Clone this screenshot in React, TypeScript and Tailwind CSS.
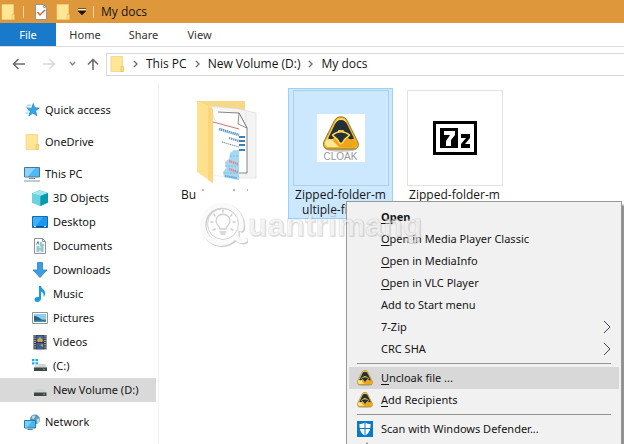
import type { ReactNode } from 'react';
import clsx from 'clsx';

function FolderIcon() {
  return (
    <svg className="h-4 w-4 shrink-0" viewBox="0 0 16 16">
      <path d="M2 0.5h11.5v15H2z" fill="#ffe694" stroke="#ecd07c" strokeWidth="0.7" />
      <path d="M12 10.5h2.5v5h-2.5z" fill="#ffdf7c" stroke="#e3bf60" strokeWidth="0.7" />
    </svg>
  );
}

function StarIcon() {
  return (
    <svg className="h-4 w-4" viewBox="0 0 16 16">
      <path d="M9.3 1.5l1.4 4.3 4.6.2-3.7 2.8 1.2 4.9-3.9-2.6-4.1 2.8 1.5-4.7-3-2.8 4.3-.2z" fill="#35a5e8" stroke="#1687cd" strokeWidth="0.7" />
      <path d="M3 3.2h4M1.5 5.2h4M3.5 8.8h2M1.5 11h3" stroke="#73c3ef" strokeWidth="0.9" />
    </svg>
  );
}

function PcIcon() {
  return (
    <svg className="h-4 w-4" viewBox="0 0 16 16">
      <path d="M.5 1.5h15v9.5H.5z" fill="#4fb8f5" stroke="#4b7690" />
      <path d="M1 2h10L4 10.5H1z" fill="#8cd3fb" />
      <path d="M5 12.5h6" stroke="#78909c" />
      <path d="M0 15h16" stroke="#8198a4" strokeWidth="1" />
    </svg>
  );
}

function CubeIcon() {
  return (
    <svg className="h-4 w-4" viewBox="0 0 16 16">
      <path d="M0 3.5L7.5.3 16 3v9.5L8.5 16 0 12.5z" fill="#20b5c9" />
      <path d="M0 3.5L7.5.3 16 3 8.5 6z" fill="#a2e6ed" />
      <path d="M0 3.5L8.5 6v10L0 12.5z" fill="#6bd3df" />
      <path d="M8.5 6L16 3v9.5L8.5 16z" fill="#0799b0" />
    </svg>
  );
}

function DesktopIcon() {
  return (
    <svg className="h-4 w-4" viewBox="0 0 16 16">
      <path d="M.5 2.5h15v11H.5z" fill="#1a98ee" stroke="#126eb1" />
      <path d="M1 3h10L4 12H1z" fill="#3eb0f8" />
      <path d="M1 12.5h14" stroke="#075689" />
      <path d="M2 12.5h2M12 12.5h2" stroke="#d4efff" />
    </svg>
  );
}

function DocumentIcon() {
  return (
    <svg className="h-4 w-4" viewBox="0 0 16 16">
      <path d="M2.5.5h8l3 3v12h-11z" fill="#fff" stroke="#8b9498" />
      <path d="M10.5.5v3h3" fill="none" stroke="#8b9498" />
      <path d="M4.5 6.5l1.5-3 1 3M8 5h2M8 7h4M4.5 9h3M8.5 9h3M4.5 11h7M4.5 13h3M8.5 13h3" fill="none" stroke="#2e8e9e" strokeWidth="1" />
    </svg>
  );
}

function DownloadIcon() {
  return (
    <svg className="h-4 w-4" viewBox="0 0 16 16">
      <path d="M5.5.5h5V8H15l-7 7.5L1 8h4.5z" fill="#3e9de2" stroke="#2983c6" strokeWidth="0.8" />
    </svg>
  );
}

function MusicIcon() {
  return (
    <svg className="h-4 w-4" viewBox="0 0 16 16">
      <path d="M7 0h2c.2 3 4.2 3.5 4.2 7.2 0 1.6-.7 2.8-1.7 3.6.5-3-.7-4.6-2.5-5.3v7.3C9 14.7 7.3 16 5.3 16 3.6 16 2.5 15 2.5 13.7c0-1.700 2-3.100 4.500-2.800z" fill="#1a9be3" />
    </svg>
  );
}

function PictureIcon() {
  return (
    <svg className="h-4 w-4" viewBox="0 0 16 16">
      <path d="M.5 2.5h15v11H.5z" fill="#fff" stroke="#8f9699" />
      <path d="M2 4h12v8H2z" fill="#8fcbed" />
      <path d="M2 6c3 0 5 1.5 7 3s3 .5 5 .5V12H2z" fill="#24617f" />
      <path d="M2 10.5h12V12H2z" fill="#4596a4" />
    </svg>
  );
}

function VideoIcon() {
  return (
    <svg className="h-4 w-4" viewBox="0 0 16 16">
      <path d="M1.5 1h13v14.5h-13z" fill="#30343b" />
      <path d="M4.5 1.5h7V8h-7z" fill="#4267a9" />
      <path d="M4.5 9h7v6h-7z" fill="#3d5c9c" />
      <path d="M5 6l3-3 3 3-1 2H6zM8 11l3-1v3z" fill="#d5a541" />
      <path d="M3 1.5v14M13 1.5v14" stroke="#f4f4f4" strokeWidth="1.3" strokeDasharray="1 1.2" />
    </svg>
  );
}

function DriveIcon({ system }: { system?: boolean }) {
  return (
    <svg className="h-4 w-4" viewBox="0 0 16 16">
      {system && <path d="M0 1h2.5v2.3H0zM3.5 1H6v2.3H3.5zM0 4.3h2.5v2.3H0zM3.5 4.3H6v2.3H3.5z" fill="#21aee5" />}
      <path d={system ? 'M6.5 6H13l2 4H2l1-2.500h3.500z' : 'M4 7h8.5l2 4H2z'} fill="#d1d4d5" />
      <path d={system ? 'M2 9.5h13V13H2z' : 'M2 10.5h12.5V14H2z'} fill="#3e4648" />
      <circle cx="12" cy={system ? 11.3 : 12.3} r=".8" fill="#48d66b" />
    </svg>
  );
}

function NetworkIcon() {
  return (
    <svg className="h-4 w-4" viewBox="0 0 16 16">
      <circle cx="11" cy="5.5" r="5" fill="#5a9ab9" />
      <path d="M8 2.5c2-2 4-.5 3 1L9.5 5 8 4.5zM12.5 5l3-.5c.5 3-1 5-2 5.5z" fill="#b9dbe4" />
      <path d="M.5 6.5h11V14H.5z" fill="#49b6ef" stroke="#267daf" />
      <path d="M1 7h7l-5 6.5H1z" fill="#7bd0f8" />
      <path d="M3.5 15.5h5" stroke="#54798b" />
    </svg>
  );
}

function CloakMark({ className }: { className: string }) {
  return (
    <svg className={className} viewBox="0 0 36 36">
      <ellipse cx="18" cy="33.5" rx="15" ry="2.2" fill="#8a8370" opacity=".5" />
      <path d="M18 .8c2.5 0 4.5 1 6 3.5l10.500 21C36.600 29 35 33 31 33H5c-4 0-5.600-4-4-7.700l10.500-21C13 1.800 15.500.8 18 .8z" fill="#f0b41e" stroke="#6b5318" strokeWidth=".7" />
      <path d="M18 2c2.200 0 4 1 5 3L18 14 5 30c-3 0-3.500-2-2.500-4.500L13 5c1-2 2.800-3 5-3z" fill="#ffd95b" />
      <path d="M18 16l15 10c.8 3-1 5-4 5H7z" fill="#efa51b" />
      <path d="M2.500 25c-1 4 .5 6 4 6H16L8 23z" fill="#ffe898" />
      <path d="M18 4c-3.500 0-5 2-6.500 5L5 22.500c3 1.500 6 .5 7.500-2l3-6.500h5l3 6.500c1.500 2.500 4.500 3.500 7.500 2L24.500 9C23 6 21.500 4 18 4z" fill="#243136" />
      <path d="M9.500 19c5-4.500 12-4.500 17 0-2 3-5 3-6.500 7l-2 2-2-2c-1.500-4-4.500-4-6.500-7z" fill="#243136" stroke="#ffd658" strokeWidth="1.500" />
    </svg>
  );
}

function DefenderIcon() {
  return (
    <svg className="h-4 w-4" viewBox="0 0 16 16">
      <path d="M0 0h16v16H0z" fill="#087bc7" />
      <path d="M8 1.5c2 1.3 3.7 1.600 5.500 1.600C13.800 9 12 12.500 8 14.800 4 12.500 2.200 9 2.500 3.100 4.300 3.100 6 2.800 8 1.500z" fill="#fff" />
      <path d="M8 1v14M2 7.500h12" stroke="#087bc7" />
    </svg>
  );
}

function FolderPreview() {
  return (
    <svg className="h-[84px] w-16" viewBox="0 0 64 84">
      <path d="M2 1h48v14H2z" fill="#f6d888" />
      <path d="M14 6l30 3 17 4v65H44z" fill="#f4f4f4" stroke="#dcdcdc" strokeWidth=".7" />
      <path d="M51 12v64" stroke="#e4e4e4" />
      <path d="M16 8l28 5 8 15v45l-10 2z" fill="#fff" />
      <path d="M23 12l21 1 8 15v45h-8" fill="none" stroke="#666" strokeWidth=".8" />
      <path d="M44 13l-1 11 9 4z" fill="#fafafa" stroke="#666" strokeWidth=".7" />
      <path d="M18 20l26 8v52l-26-5z" fill="#fff" stroke="#e3e3e3" strokeWidth=".5" />
      <path d="M18 22l26 7" stroke="#b05a60" strokeWidth=".8" />
      <path d="M24 29l20 6" stroke="#6a9cc2" strokeWidth="2.6" strokeDasharray="1.5 .5" />
      <path d="M34 38l10 3" stroke="#7b9fbd" strokeWidth="2.2" strokeDasharray="1.5 .6" />
      <path d="M27 42l17 5" stroke="#8793a2" strokeDasharray="1.5 .5" />
      <path d="M44 37h6M44 41h6M44 45h6M44 50h6" stroke="#3c7fbb" strokeWidth="2" />
      <path d="M44 50v30l-15-3-1-5 3-4-1-6 4-3 1-6 4-3z" fill="#a6d9f1" />
      <path d="M30 66h13M29 73h14M35 56h9" stroke="#79bfe4" strokeWidth="1" strokeDasharray="2 1" />
      <path d="M34 61l9 3M34 69l9 3" stroke="#dd8b98" strokeWidth="2.4" strokeDasharray="1.5 .5" />
      <path d="M30 76l12 2" stroke="#5aa9d8" strokeWidth="2" strokeDasharray="1.5 .6" />
      <path d="M2 1l15 6v75L2 72z" fill="#ffe08e" />
      <path d="M13 6l5 3v74l-5-3z" fill="#fbd67c" />
    </svg>
  );
}

const sidebar: { label: string; icon: ReactNode; nested?: boolean; selected?: boolean; spaced?: boolean }[] = [
  { label: 'Quick access', icon: <StarIcon /> },
  { label: 'OneDrive', icon: <FolderIcon />, spaced: true },
  { label: 'This PC', icon: <PcIcon />, spaced: true },
  { label: '3D Objects', icon: <CubeIcon />, nested: true },
  { label: 'Desktop', icon: <DesktopIcon />, nested: true },
  { label: 'Documents', icon: <DocumentIcon />, nested: true },
  { label: 'Downloads', icon: <DownloadIcon />, nested: true },
  { label: 'Music', icon: <MusicIcon />, nested: true },
  { label: 'Pictures', icon: <PictureIcon />, nested: true },
  { label: 'Videos', icon: <VideoIcon />, nested: true },
  { label: '(C:)', icon: <DriveIcon system />, nested: true },
  { label: 'New Volume (D:)', icon: <DriveIcon />, nested: true, selected: true },
  { label: 'Network', icon: <NetworkIcon />, spaced: true },
];

function Sidebar() {
  return (
    <nav className="w-[159px] shrink-0 border-r border-[#f0f0f0] pt-[14px] pr-[2px]">
      {sidebar.map((item) => (
        <button
          key={item.label}
          className={clsx(
            'flex h-6 w-full items-center gap-[5px] whitespace-nowrap',
            item.nested ? 'pl-8' : 'pl-6',
            item.spaced && 'mt-2',
            item.selected && 'bg-[#d9d9d9]'
          )}
        >
          {item.icon}
          <span>{item.label}</span>
        </button>
      ))}
    </nav>
  );
}

interface MenuItemProps {
  label: string;
  hotkey?: boolean;
  bold?: boolean;
  active?: boolean;
  submenu?: boolean;
  icon?: ReactNode;
}

function MenuItem({ label, hotkey, bold, active, submenu, icon }: MenuItemProps) {
  return (
    <button role="menuitem" className={clsx('flex h-[22px] w-full items-center pr-2 pl-2', active && 'bg-[#d8d8d8]', bold && 'font-bold')}>
      <span className="flex w-6 shrink-0 items-center">{icon}</span>
      <span className="flex-1 text-left whitespace-nowrap">
        {hotkey ? <span className="underline underline-offset-2">{label[0]}</span> : label[0]}
        {label.slice(1)}
      </span>
      {submenu && (
        <svg className="h-3 w-2" viewBox="0 0 8 12">
          <path d="M1 0l6 6-6 6" fill="none" stroke="#414159" />
        </svg>
      )}
    </button>
  );
}

function ContextMenu() {
  return (
    <div role="menu" className="absolute top-[201px] left-[346px] w-[276px] border border-[#999] bg-[#f1f1f1] px-[2px] py-1 shadow-[3px_4px_2px_#8d8d8d]">
      <MenuItem label="Open" hotkey bold />
      <MenuItem label="Open in Media Player Classic" hotkey />
      <MenuItem label="Open in MediaInfo" hotkey />
      <MenuItem label="Open in VLC Player" hotkey />
      <MenuItem label="Add to Start menu" />
      <MenuItem label="7-Zip" submenu />
      <MenuItem label="CRC SHA" submenu />
      <hr className="mx-2 my-[3px] border-[#92958e]" />
      <MenuItem label="Uncloak file ..." hotkey active icon={<CloakMark className="h-4 w-4" />} />
      <MenuItem label="Add Recipients" hotkey icon={<CloakMark className="h-4 w-4" />} />
      <hr className="mx-2 my-[3px] border-[#92958e]" />
      <MenuItem label="Scan with Windows Defender..." icon={<DefenderIcon />} />
      <div className="h-6 pt-[2px] pl-4">
        <svg className="h-2 w-2" viewBox="0 0 8 8">
          <path d="M0 4l2-4 2 4" fill="#767676" />
        </svg>
      </div>
    </div>
  );
}

function Watermark() {
  return (
    <div className="pointer-events-none absolute top-[200px] left-[200px] flex items-center" aria-hidden="true">
      <svg className="h-[50px] w-[48px]" viewBox="0 0 48 50">
        <g fill="none" strokeLinecap="round">
          <path d="M45 40c-5 2-9-1-9-5-5 8-16 11-24 6C4 36 1 27 4 18 7 9 17 3 27 6c10 3 16 13 14 23" transform="translate(1 1)" stroke="#cdcdcd" strokeWidth="5.5" />
          <path d="M45 40c-5 2-9-1-9-5-5 8-16 11-24 6C4 36 1 27 4 18 7 9 17 3 27 6c10 3 16 13 14 23" stroke="#fafafa" strokeWidth="5" />
          <circle cx="23" cy="24" r="15.5" stroke="#d4d4d4" />
          <path d="M20 29c0-3-4-4-4-8 0-9 14-9 14 0 0 4-4 5-4 8zM20 32h6M21 34h4" stroke="#cecece" strokeWidth="1.3" />
          <path d="M23 10v2M14 14l1 2M32 14l-1 2M11 22h2M33 22h2M13 30l2-1M33 30l-2-1" stroke="#cecece" strokeWidth="1.5" />
        </g>
      </svg>
      <span className="font-['Liberation_Sans',sans-serif] text-[32px] leading-[50px] font-bold text-white/50 [-webkit-text-stroke:1px_rgba(130,130,130,0.2)] [text-shadow:1px_1px_1px_rgba(0,0,0,0.1)]">uantrimang</span>
    </div>
  );
}

function NavChevron() {
  return (
    <svg className="h-2 w-[5px] shrink-0" viewBox="0 0 5 8">
      <path d="M1 1l3 3-3 3" fill="none" stroke="#727272" strokeWidth="1.4" />
    </svg>
  );
}

export default function App() {
  return (
    <div className="relative flex h-screen flex-col overflow-hidden bg-white font-['Noto_Sans','Open_Sans',sans-serif] text-[11px] leading-4 text-[#151515]">
      <header className="flex h-[23px] shrink-0 items-center bg-[#de983b]">
        <FolderIcon />
        <span className="ml-[7px] h-3 w-px bg-[#f1d3a7]" />
        <svg className="ml-[9px] h-4 w-4" viewBox="0 0 16 16">
          <path d="M2.5.5h8l3 3v12h-11z" fill="#fff" stroke="#99918a" />
          <path d="M10.5.5v3h3" fill="none" stroke="#aaa" />
          <path d="M4.5 8l2.5 3 5-5" fill="none" stroke="#d66635" strokeWidth="1.5" />
        </svg>
        <span className="ml-[6px] flex"><FolderIcon /></span>
        <svg className="ml-[7px] h-[7px] w-2" viewBox="0 0 8 7">
          <path d="M0 .5h8M0 3h8L4 7z" fill="#17120e" stroke="#17120e" strokeWidth=".5" />
          <path d="M0 1.5h8" stroke="#fff3df" />
        </svg>
        <span className="ml-[7px] h-3 w-px bg-[#f1d3a7]" />
        <h1 className="ml-[7px] font-['Open_Sans',sans-serif] text-xs">My docs</h1>
      </header>

      <div role="tablist" className="flex h-6 shrink-0 border-b border-[#dadbdc] text-[#333]">
        <button role="tab" aria-selected="true" className="w-14 bg-[#1979ca] text-white">File</button>
        <button role="tab" className="w-[58px]">Home</button>
        <button role="tab" className="w-[59px]">Share</button>
        <button role="tab" className="w-[53px]">View</button>
      </div>

      <div className="flex h-[37px] shrink-0 items-center pb-[3px]">
        <button aria-label="Back" className="ml-3">
          <svg className="h-3 w-[14px]" viewBox="0 0 14 12"><path d="M13 6H2M6.5 1L1.5 6l5 5" fill="none" stroke="#6e6e6e" strokeWidth="1.6" /></svg>
        </button>
        <button aria-label="Forward" className="ml-4">
          <svg className="h-3 w-[14px]" viewBox="0 0 14 12"><path d="M1 6h11M7.5 1l5 5-5 5" fill="none" stroke="#d9d9d9" strokeWidth="1.4" /></svg>
        </button>
        <button aria-label="Recent locations" className="ml-[13px]">
          <svg className="h-2 w-[7px]" viewBox="0 0 7 8"><path d="M1 2l2.5 3L6 2" fill="none" stroke="#858585" strokeWidth="1.4" /></svg>
        </button>
        <button aria-label="Up" className="ml-[11px]">
          <svg className="h-3 w-3" viewBox="0 0 12 12"><path d="M6 12V2M1 6.5l5-5 5 5" fill="none" stroke="#707070" strokeWidth="1.6" /></svg>
        </button>
        <div className="ml-[7px] flex h-[23px] min-w-0 flex-1 items-center gap-2 border border-r-0 border-[#d9d9d9] pl-[2px] font-['Open_Sans',sans-serif] text-xs">
          <FolderIcon />
          <NavChevron />
          <button>This PC</button>
          <NavChevron />
          <button>New Volume (D:)</button>
          <NavChevron />
          <button>My docs</button>
        </div>
      </div>

      <div className="flex min-h-0 flex-1">
        <Sidebar />
        <main className="flex flex-1 items-start gap-[9px] pt-1 pl-[15px]">
          <button className="flex w-[105px] flex-col items-center">
            <span className="flex h-[99px] items-center pt-2"><FolderPreview /></span>
            <span className="flex w-full items-center pl-[7px] font-['Open_Sans',sans-serif] text-xs leading-[15px]">
              Bu
              <svg className="ml-[5px] h-3 w-[50px]" viewBox="0 0 50 12">
                <path d="M1 1h2M32 1h2M46 1h1" stroke="#777" />
              </svg>
            </span>
          </button>
          <button className="flex w-[105px] flex-col items-center border border-[#99d1ff] bg-[#cce8ff] pt-px pb-px">
            <span className="flex h-24 w-24 items-center justify-center border border-[#b0cfe6]">
              <span className="flex h-12 w-12 flex-col items-center bg-white pt-[2px]">
                <CloakMark className="h-9 w-9" />
                <span className="font-['Liberation_Sans',sans-serif] text-[10px] leading-[9px] text-[#999]">CLOAK</span>
              </span>
            </span>
            <span className="pt-px font-['Open_Sans',sans-serif] text-xs leading-[15px]">Zipped-folder-m<br />ultiple-files.7z</span>
          </button>
          <button className="flex w-[105px] flex-col items-center pt-[2px]">
            <span className="flex h-24 w-24 items-center justify-center border border-[#e2e2e2]">
              <svg className="h-[34px] w-11" viewBox="0 0 44 34">
                <path d="M1.5 1.5h41v31h-41z" fill="#fff" stroke="#000" strokeWidth="3" />
                <path d="M7 7h18v20H7z" fill="#000" />
                <path d="M11 10h11v4l-4 5v6h-5v-5l4-6h-6z" fill="#fff" />
                <path d="M28 13h9v4l-5 6h5v4h-9v-4l5-6h-5z" fill="#000" />
              </svg>
            </span>
            <span className="pt-px font-['Open_Sans',sans-serif] text-xs leading-[15px]">Zipped-folder-m</span>
          </button>
        </main>
      </div>

      <ContextMenu />
      <Watermark />
    </div>
  );
}
